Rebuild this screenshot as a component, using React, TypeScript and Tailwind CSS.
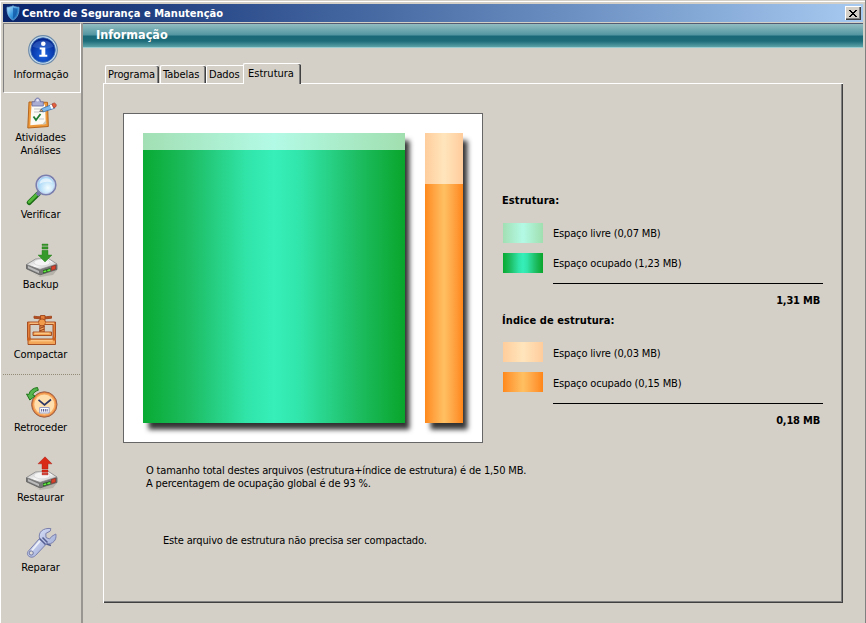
import type { ReactNode } from "react";

function ShieldIcon() {
  return (
    <svg width="14" height="16" viewBox="0 0 14 16">
      <defs>
        <linearGradient id="sh" x1="0" y1="0" x2="1" y2="1">
          <stop offset="0" stopColor="#bfe6ff" />
          <stop offset=".5" stopColor="#3a9be0" />
          <stop offset="1" stopColor="#0b56a8" />
        </linearGradient>
      </defs>
      <path d="M7 .8C5 2 3 2.400 1 2.200c-.2 6 1.300 10.300 6 13 4.700-2.700 6.200-7 6-13-2 .2-4-.2-6-1.400z" fill="url(#sh)" stroke="#6fa9d8" strokeWidth=".8" />
      <path d="M7 2.500v11c3-2.100 4.300-5 4.500-9.900C9.800 3.700 8.400 3.400 7 2.500z" fill="#0c4f9e" opacity=".65" />
    </svg>
  );
}

function InfoIcon() {
  return (
    <svg width="32" height="32" viewBox="0 0 32 32">
      <defs>
        <radialGradient id="inf" cx=".5" cy=".7" r=".65">
          <stop offset="0" stopColor="#1e66e0" />
          <stop offset=".6" stopColor="#0a3fb4" />
          <stop offset="1" stopColor="#06258a" />
        </radialGradient>
      </defs>
      <circle cx="16" cy="16" r="14.300" fill="#c4dcf0" stroke="#6c8aa8" strokeWidth="1.200" />
      <circle cx="16" cy="16" r="12.300" fill="url(#inf)" stroke="#3f74b8" strokeWidth=".8" />
      <path d="M5.500 12.500C8 5 23 4 26.500 12.500 20 16 12 15 5.500 12.500z" fill="#5c8ade" opacity=".35" />
      <circle cx="16.300" cy="9.800" r="2.300" fill="#fff" />
      <path d="M12.700 13.500h5.600v7.200h2v2h-8v-2h2.200v-5.200h-1.800z" fill="#fff" />
    </svg>
  );
}

function ClipboardIcon() {
  return (
    <svg width="32" height="32" viewBox="0 0 32 32">
      <path d="M3 5l18.500.3.8 24.200-20.500 1.500z" fill="#ee9a3a" stroke="#b5651c" strokeWidth="1" />
      <path d="M5.500 8l13.500-.5.8 19.500-15.500 1.200z" fill="#fbfaf5" />
      <path d="M16 27.800l4.300-.8-.2-4z" fill="#cfc6b4" />
      <path d="M6 4.800h2.700c0-5 5.800-5 5.800 0h2.800v4.200H6z" fill="#a9add2" stroke="#6669a1" strokeWidth=".8" />
      <circle cx="11.600" cy="3.300" r="1.200" fill="#e9e9f6" />
      <path d="M8 12h7M8 15h5M13 22h5" stroke="#c5c5c5" strokeWidth="1" />
      <path d="M7.500 19.500l2.500 3.500 4.500-6" fill="none" stroke="#1d7d33" strokeWidth="1.800" />
      <path d="M14.500 14.300l1-2.600 11.200-4.500 2 4-11 3.600z" fill="#80b9eb" stroke="#3970af" strokeWidth=".8" />
      <path d="M13.500 14.600l1.800-2.600 2 2.600z" fill="#dcb073" stroke="#3b3c4b" strokeWidth=".5" />
      <path d="M23.800 8.200l2-1 2 3.800-2.300.9z" fill="#fff" />
      <path d="M25.800 7l2.500-1.100c2 .8 2.600 2.600 1.300 4l-2 1z" fill="#e3603f" stroke="#9d3524" strokeWidth=".6" />
    </svg>
  );
}

function MagnifierIcon() {
  return (
    <svg width="32" height="32" viewBox="0 0 32 32">
      <defs>
        <radialGradient id="mag" cx=".6" cy=".65">
          <stop offset="0" stopColor="#f4fdff" />
          <stop offset="1" stopColor="#a8d7f7" />
        </radialGradient>
      </defs>
      <path d="M12 20L3.300 28.500" stroke="#1c6c15" strokeWidth="5" strokeLinecap="round" />
      <path d="M11.500 19.800L3.200 28" stroke="#54b83b" strokeWidth="2.800" strokeLinecap="round" />
      <path d="M11 21l3-3" stroke="#7477a5" strokeWidth="4" />
      <circle cx="20" cy="11" r="9.600" fill="url(#mag)" stroke="#7b7fae" strokeWidth="2" />
      <circle cx="20" cy="11" r="8.600" fill="none" stroke="#c3d3ec" strokeWidth="1" />
      <path d="M13.500 10c.3-7 11.500-8 13-1-4-2-8-1.500-13 1z" fill="#fff" opacity=".6" />
    </svg>
  );
}

function DriveIcon({ up = false }: { up?: boolean }) {
  return (
    <svg width="34" height="34" viewBox="0 0 34 34">
      <defs>
        <linearGradient id="dr" x1="0" y1="0" x2="1" y2="1">
          <stop offset="0" stopColor="#bcbcbc" />
          <stop offset=".5" stopColor="#f9f9f9" />
          <stop offset="1" stopColor="#a6a6a6" />
        </linearGradient>
      </defs>
      <path d="M4 28l10 5 18-6-4 5-13 2z" fill="#aaa69e" opacity=".7" />
      <path d="M1.500 21.500v4.300L15 32l17-5.500v-5l-17 4.700z" fill="#777" stroke="#555" strokeWidth=".7" />
      <path d="M1.500 21.500L10.500 16l13-.5L32 21l-17 5.500z" fill="url(#dr)" stroke="#858585" strokeWidth=".8" />
      <path d="M3 23l11 5v2.300l-11-5z" fill="#bbb" />
      <ellipse cx="17" cy="19.500" rx="8" ry="3.400" fill="#f4f4f4" stroke="#ccc" strokeWidth=".6" />
      <path d="M18 27.300l7.500-2.200v3L18 30.500z" fill="#245b20" />
      <path d="M18.500 28.800l2.800-.8m1-.3l2.800-.8" stroke="#65ed42" strokeWidth="1.700" />
      <path d="M26.500 23.500l4-1.200v3.800l-4 1.300z" fill="#d8432c" stroke="#8a2218" strokeWidth=".5" />
      {up ? (
        <g fill="#d92a18" stroke="#a6150d" strokeWidth=".4">
          <path d="M20 .8l7 7h-4V13h-6V7.800h-4z" />
          <path d="M17 14h6v2.300h-6zM17 17.300h6v1.500h-6z" />
        </g>
      ) : (
        <g fill="#36992a" stroke="#247718" strokeWidth=".4">
          <path d="M17 1h6v1.500h-6zM17 3.700h6V6h-6z" />
          <path d="M17 7.300h6V12h4l-7 7-7-7h4z" />
        </g>
      )}
    </svg>
  );
}

function PressIcon() {
  return (
    <svg width="32" height="32" viewBox="0 0 32 32">
      <g stroke="#a0451a" strokeWidth=".9" fill="#e5803a">
        <path d="M1.500 8h28v17h-2.500V10.500H4V25H1.500z" />
        <path d="M8 2.200c5 .8 11 .8 17.500 0v2c-6 .8-12 .8-17.500 0z" fill="#b54d23" />
        <path d="M14.500 1.500h4.500V6h-4.500z" />
        <circle cx="16" cy="8.500" r="3.600" fill="#f09a4a" />
        <path d="M13.800 12h4.400v6h-4.400z" fill="#f3aa66" />
        <path d="M13.500 14.500l5-2m-5 4.500l5-2" strokeWidth="1.300" />
        <path d="M7 18h18.500v3.500H7z" fill="#f2a251" />
        <path d="M2 25h27.500v5.500H2z" fill="#f3a657" />
      </g>
      <path d="M3.500 9.200h9m7 0h8.500M4.500 26.800h22M8.500 19.200h15" stroke="#ffd69a" strokeWidth="1" />
      <path d="M1 23.500h3.500v3H1zM27 23.500h3v3h-3z" fill="#c9601f" />
    </svg>
  );
}

function ClockIcon() {
  return (
    <svg width="34" height="34" viewBox="0 0 34 34">
      <circle cx="19.300" cy="18.500" r="12.700" fill="#e8843c" stroke="#99614b" strokeWidth="1" />
      <circle cx="19.300" cy="18.500" r="10.600" fill="#ffdfae" stroke="#f7ab61" strokeWidth="1.200" />
      <path d="M13.500 13.800l6 5.200 6.500-5.500" fill="none" stroke="#2d3664" strokeWidth="1.700" />
      <path d="M14.700 21.500h9.500v5.500h-9.500z" fill="#fff" stroke="#9296c4" strokeWidth=".9" />
      <path d="M16.700 23v2.600m1.800-2.600v2.600m1.800-2.600v2.600m1.800-2.600v2.600" stroke="#575b92" strokeWidth="1" />
      <path d="M12.500 1.500l.8 2.800c-3 .8-5 2.700-5.500 4.700l2.300 1-5.300 4L1.500 8l2.300.5C4.800 4.500 8 2 12.500 1.500z" fill="#54b44e" stroke="#207518" strokeWidth="1" />
    </svg>
  );
}

function WrenchIcon() {
  return (
    <svg width="32" height="32" viewBox="0 0 32 32">
      <defs>
        <linearGradient id="wr" x1="0" y1="0" x2="1" y2="1">
          <stop offset="0" stopColor="#e7eeff" />
          <stop offset="1" stopColor="#909dcf" />
        </linearGradient>
      </defs>
      <path d="M13.500 11.500C12 5 17 .8 24.800 1.500l-.5 2.500-4.500 2.500.2 4 3.500 1.500 2.500-2.800 3.800-2.200c1.300 6-3 10.500-9.500 10L9.500 28.500C5.500 32.500-.5 28.700 2 24.500z" fill="url(#wr)" stroke="#7a80ac" strokeWidth="1" />
      <path d="M14 13.800L5.500 24" stroke="#fff" strokeWidth="1.800" opacity=".75" />
      <path d="M13.500 11.500l6 6M16.500 10.500l5 5M20.500 17l4.500 1.500" stroke="#555e90" strokeWidth="1.500" />
      <circle cx="5.200" cy="26" r="2.100" fill="#e0ddd8" stroke="#6d76a2" strokeWidth="1" />
    </svg>
  );
}

function SideItem({ icon, label, className }: { icon: ReactNode; label: string; className: string }) {
  return (
    <div className={`flex flex-col items-center ${className}`}>
      <div className="flex h-[32px] w-[32px] items-center justify-center [&>svg]:shrink-0">{icon}</div>
      <div className="mt-[2px] -mb-px pr-[3px] text-center tracking-[-0.1px] whitespace-pre">{label}</div>
    </div>
  );
}

function Legend({ color, label, low = false }: { color: string; label: string; low?: boolean }) {
  return (
    <div className="flex h-[20px] items-center gap-[10px]">
      <div className={`h-[20px] w-[40px] ${color}`} />
      <span className={low ? "pt-[2px]" : ""}>{label}</span>
    </div>
  );
}

const greenLight = "bg-linear-to-r from-[#a2dfb3] via-[#b3fae6] to-[#a1dfaf]";
const green = "bg-[linear-gradient(to_right,#09aa32_0%,#1dbd62_18%,#31e5aa_40%,#36efb9_50%,#31e5aa_60%,#1dbd62_82%,#09a52b_100%)]";
const orangeLight = "bg-linear-to-r from-[#ffcd9c] via-[#ffe5bc] to-[#ffcc9c]";
const orange = "bg-linear-to-r from-[#ff8918] via-[#ffc062] to-[#ff8616]";
const tab = "rounded-t-[2px] border-t border-l border-white shadow-[inset_-1px_0_0_#404040,inset_-2px_0_0_#808080]";

export default function App() {
  return (
    <div className="flex h-[623px] w-[866px] flex-col overflow-hidden border-r border-[#808080] bg-[#d4d0c8] font-['DejaVu_Sans_Condensed','DejaVu_Sans',sans-serif] text-[11px] leading-[13px] tracking-[-0.16px] whitespace-nowrap text-black">
      <div className="mt-px flex grow flex-col border-t border-l border-white pt-[2px] pr-[2px] pl-[2px]">
        <div className="flex h-[18px] items-center bg-linear-to-r from-[#0a246a] to-[#a6caf0] pr-[2px] pl-[3px] text-white">
          <ShieldIcon />
          <span className="ml-[2px] grow font-bold tracking-[0.06px]">Centro de Segurança e Manutenção</span>
          <div className="flex h-[14px] w-[16px] items-center justify-center border-t border-l border-white bg-[#d4d0c8] shadow-[inset_-1px_-1px_0_#404040,inset_-2px_-2px_0_#808080]">
            <svg width="8" height="7" viewBox="0 0 8 7" shapeRendering="crispEdges" className="-mt-px -ml-px">
              <path d="M0 0h2v1h1v1h2V1h1V0h2v1H7v1H6v1H5v1h1v1h1v1h1v1H6V6H5V5H3v1H2v1H0V6h1V5h1V4h1V3H2V2H1V1H0z" fill="#000" />
            </svg>
          </div>
        </div>
        <div className="mt-px flex grow">
          <nav className="flex w-[80px] shrink-0 flex-col border-r-2 border-r-[#999691]">
            <SideItem className="h-[70px] border border-t-[#808080] border-r-white border-b-white border-l-[#808080] pt-[10px] pl-px" icon={<InfoIcon />} label="Informação" />
            <SideItem className="mt-[4px]" icon={<ClipboardIcon />} label={"Atividades\nAnálises"} />
            <SideItem className="mt-[18px]" icon={<MagnifierIcon />} label="Verificar" />
            <SideItem className="mt-[24px]" icon={<DriveIcon />} label="Backup" />
            <SideItem className="mt-[24px]" icon={<PressIcon />} label="Compactar" />
            <div className="mt-[14px] h-px bg-[repeating-linear-gradient(to_right,#918b78_0_1px,transparent_1px_2px)]" />
            <SideItem className="mt-[12px]" icon={<ClockIcon />} label="Retroceder" />
            <SideItem className="mt-[24px]" icon={<DriveIcon up />} label="Restaurar" />
            <SideItem className="mt-[24px]" icon={<WrenchIcon />} label="Reparar" />
          </nav>
          <main className="flex grow flex-col">
            <h1 className="h-[25px] border-t border-b border-t-[#535b73] border-b-[#9bcdd0] bg-[linear-gradient(to_bottom,#91bcc1_0,#5296a1_11px,#196877_12px,#1c6c7a_17px,#5ca2a7_23px)] pt-[3px] pl-[13px] text-[12.5px] leading-[16px] font-bold tracking-[0px] text-white">
              Informação
            </h1>
            <div className="mt-[15px] ml-[22px] flex h-[20px] items-end">
              <div className={`flex h-[18px] w-[54px] items-center pl-[2px] tracking-[-0.1px] ${tab}`}>Programa</div>
              <div className={`ml-px flex h-[18px] w-[46px] items-center pl-[2px] tracking-[-0.05px] ${tab}`}>Tabelas</div>
              <div className="flex h-[18px] w-[38px] items-center rounded-tl-[2px] border-t border-l border-white pl-[2px]">Dados</div>
              <div className={`z-10 -mb-px -ml-px flex h-[21px] w-[58px] items-start bg-[#d4d0c8] pt-[3px] pl-[4px] tracking-[0px] ${tab}`}>Estrutura</div>
            </div>
            <section className="ml-[20px] flex h-[520px] w-[740px] flex-col border-t border-l border-white shadow-[inset_-1px_-1px_0_#404040,inset_-2px_-2px_0_#808080]">
              <div className="mt-[29px] ml-[19px] flex">
                <div className="flex h-[330px] w-[360px] gap-[20px] border border-[#666] bg-white pt-[19px] pl-[19px]">
                  <div className="flex h-[290px] w-[262px] flex-col shadow-[4.500px_6.500px_5px_#333]">
                    <div className={`h-[17px] ${greenLight}`} />
                    <div className={`grow ${green}`} />
                  </div>
                  <div className="flex h-[290px] w-[38px] flex-col shadow-[4.500px_6.500px_5px_#333]">
                    <div className={`h-[51px] ${orangeLight}`} />
                    <div className={`grow ${orange}`} />
                  </div>
                </div>
                <div className="ml-[20px] flex w-[320px] flex-col pt-[81px]">
                  <strong className="-ml-px h-[13px] tracking-[0.08px]">Estrutura:</strong>
                  <div className="mt-[16px] flex flex-col gap-[10px]">
                    <Legend color={greenLight} label="Espaço livre (0,07 MB)" />
                    <Legend color={green} label="Espaço ocupado (1,23 MB)" />
                  </div>
                  <div className="mt-[10px] ml-[50px] h-px bg-black" />
                  <strong className="mt-[10px] mr-[3px] text-right tracking-[-0.2px]">1,31 MB</strong>
                  <strong className="mt-[7px] -ml-px tracking-[0.08px]">Índice de estrutura:</strong>
                  <div className="mt-[15px] flex flex-col gap-[10px]">
                    <Legend color={orangeLight} label="Espaço livre (0,03 MB)" low />
                    <Legend color={orange} label="Espaço ocupado (0,15 MB)" low />
                  </div>
                  <div className="mt-[11px] ml-[50px] h-px bg-black" />
                  <strong className="mt-[10px] mr-[3px] text-right tracking-[-0.2px]">0,18 MB</strong>
                </div>
              </div>
              <p className="mt-[21px] ml-[42px]">
                O tamanho total destes arquivos (estrutura+índice de estrutura) é de 1,50 MB.
                <br />A percentagem de ocupação global é de 93 %.
              </p>
              <p className="mt-[44px] ml-[59px]">Este arquivo de estrutura não precisa ser compactado.</p>
            </section>
          </main>
        </div>
      </div>
    </div>
  );
}
